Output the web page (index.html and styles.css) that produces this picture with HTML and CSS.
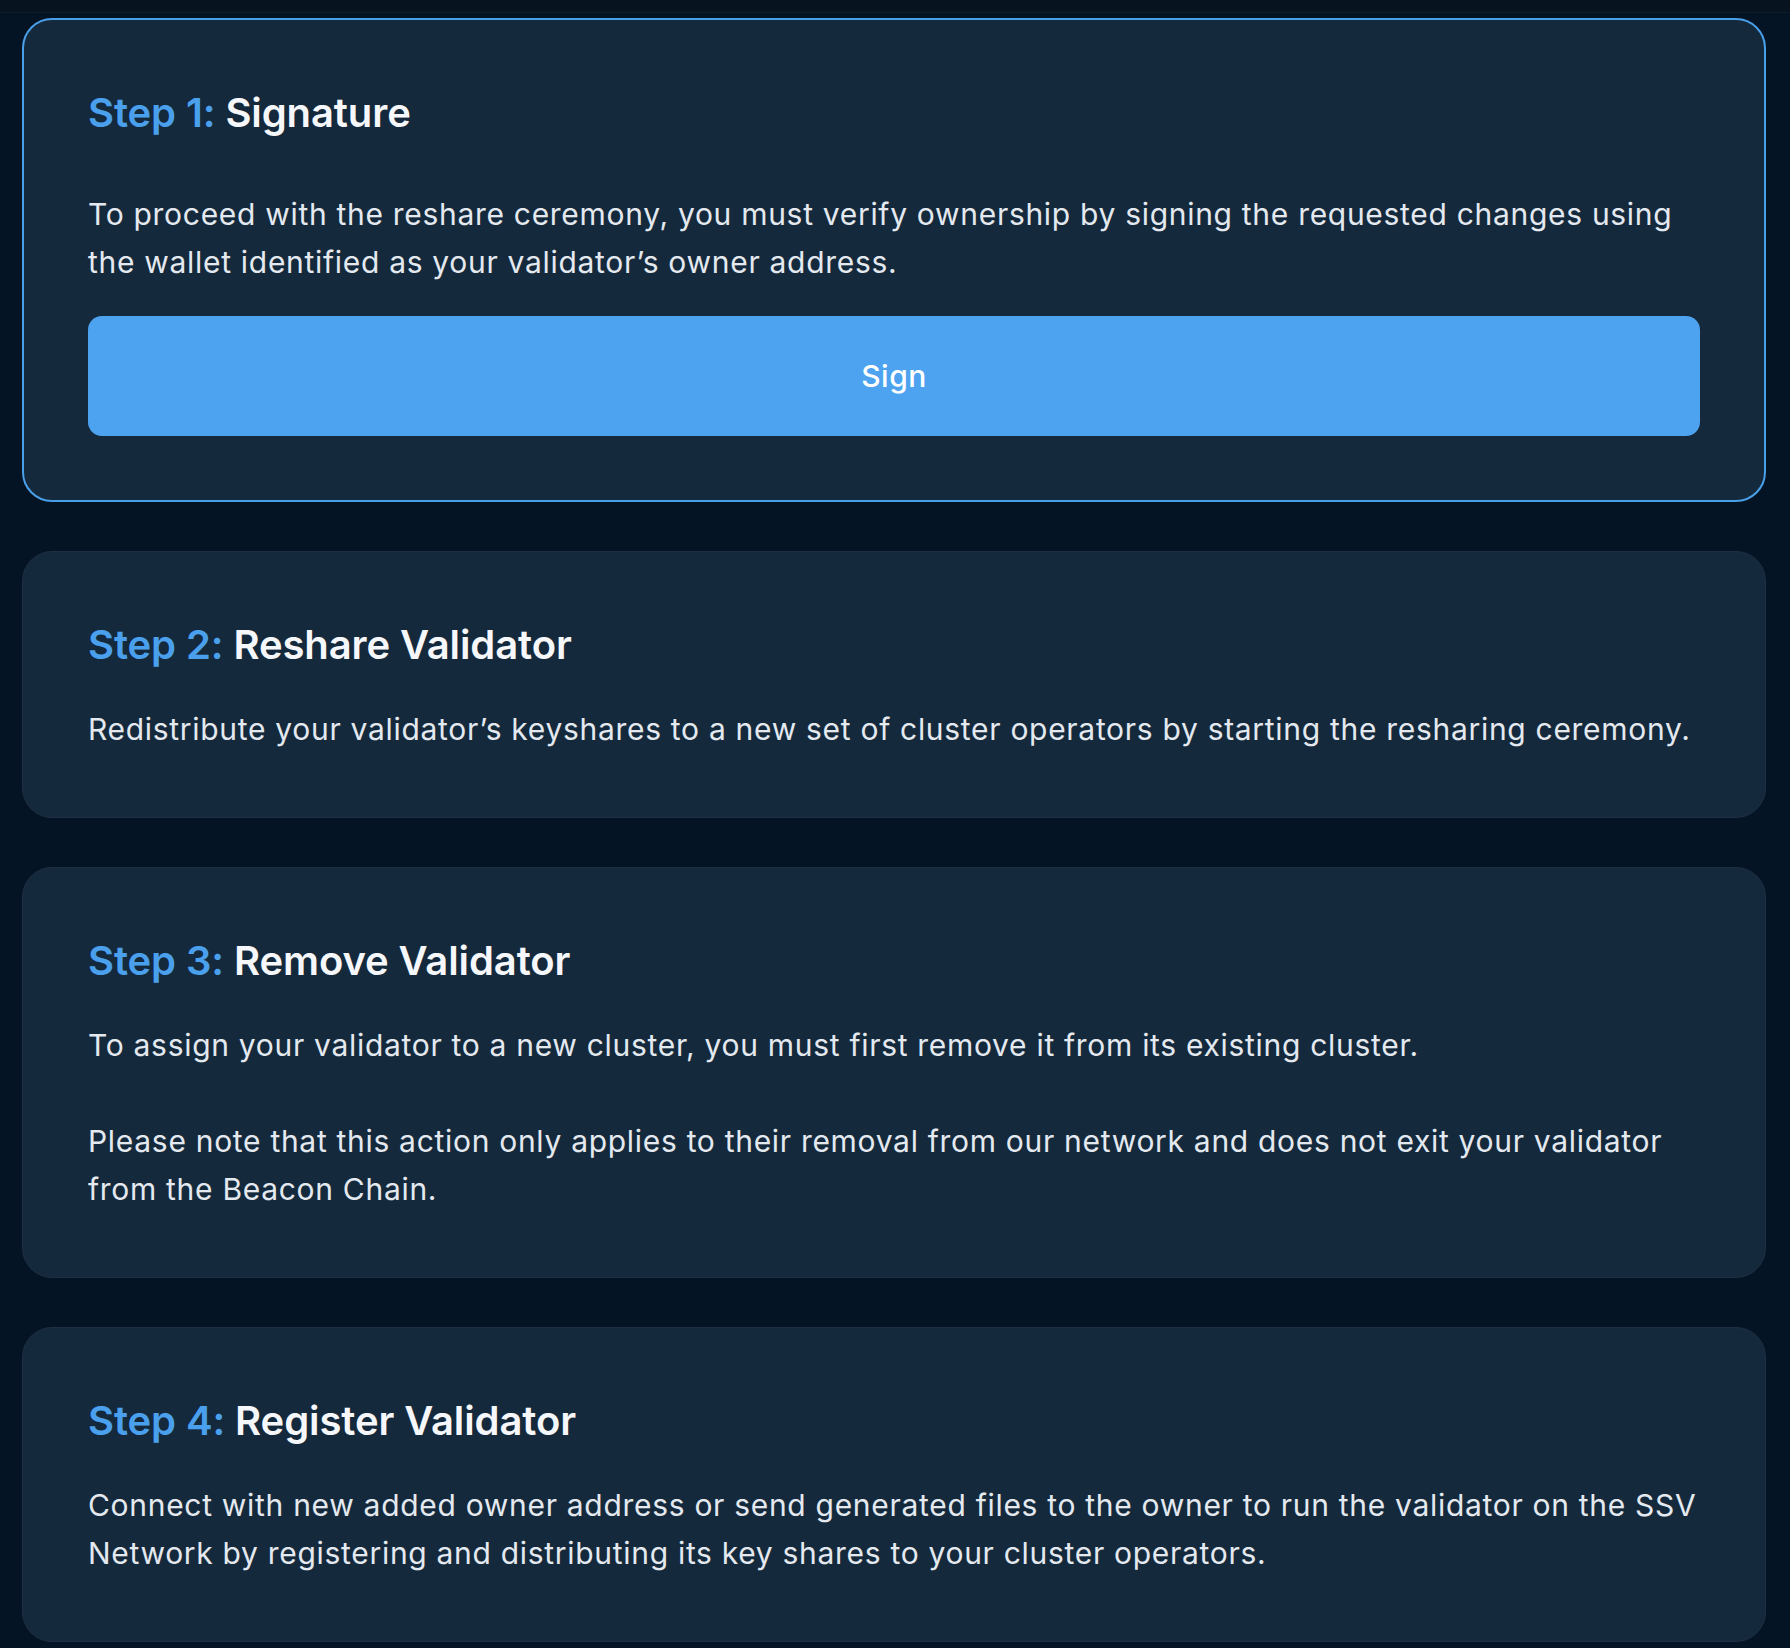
FILE: index.html
```html
<!DOCTYPE html>
<html lang="en">
<head>
<meta charset="utf-8">
<title>Reshare steps</title>
<link rel="stylesheet" href="styles.css">
</head>
<body>
<div class="topbar"></div>
<main class="steps">
  <section class="card card-active">
    <h2 class="card-title card-title-first"><span class="step">Step 1:</span> Signature</h2>
    <p class="card-text">To proceed with the reshare ceremony, you must verify ownership by signing the requested changes using the wallet identified as your validator’s owner address.</p>
    <button class="btn-sign" type="button">Sign</button>
  </section>
  <section class="card">
    <h2 class="card-title"><span class="step">Step 2:</span> Reshare Validator</h2>
    <p class="card-text">Redistribute your validator’s keyshares to a new set of cluster operators by starting the resharing ceremony.</p>
  </section>
  <section class="card">
    <h2 class="card-title"><span class="step">Step 3:</span> Remove Validator</h2>
    <p class="card-text">To assign your validator to a new cluster, you must first remove it from its existing cluster.</p>
    <p class="card-text card-text-spaced">Please note that this action only applies to their removal from our network and does not exit your validator from the Beacon Chain.</p>
  </section>
  <section class="card">
    <h2 class="card-title"><span class="step">Step 4:</span> Register Validator</h2>
    <p class="card-text">Connect with new added owner address or send generated files to the owner to run the validator on the SSV Network by registering and distributing its key shares to your cluster operators.</p>
  </section>
</main>
</body>
</html>
```
FILE: styles.css
```css
* { box-sizing: border-box; }

html, body {
  margin: 0;
  padding: 0;
  background: #051424;
}

body {
  font-family: "Inter", "Noto Sans", sans-serif;
  color: #e4e9f0;
  min-height: 1648px;
}

.topbar {
  height: 13px;
  background: #07131f;
  border-bottom: 1px solid #0f1c29;
}

.steps {
  display: flex;
  flex-direction: column;
  gap: 49px;
  width: 1744px;
  margin-left: 22px;
  padding-top: 5px;
}

.card {
  background: #15293c;
  border: 1px solid #1f2e44;
  border-radius: 30px;
  padding: 69px 65px 64px;
  display: flex;
  flex-direction: column;
}

.card-active {
  border: 2px solid #4a9fe9;
  padding: 69px 64px 64px;
}

.card-title {
  margin: 0 0 36px;
  font-size: 40px;
  line-height: 48px;
  font-weight: 600;
  color: #f5f7fa;
  letter-spacing: -0.1px;
}

.card-title-first { margin-bottom: 53px; }

.step { color: #4aa0ec; }

.card-text {
  margin: 0;
  font-size: 30px;
  line-height: 48px;
  font-weight: 400;
  letter-spacing: 0.7px;
  color: #e4e9f0;
}

.card-text-spaced { margin-top: 48px; }

.btn-sign {
  margin-top: 30px;
  height: 120px;
  width: 100%;
  border: none;
  border-radius: 14px;
  background: #4da3ef;
  color: #ffffff;
  font-family: "Inter", "Noto Sans", sans-serif;
  font-size: 30px;
  font-weight: 500;
  letter-spacing: 0.5px;
  cursor: pointer;
}
```
